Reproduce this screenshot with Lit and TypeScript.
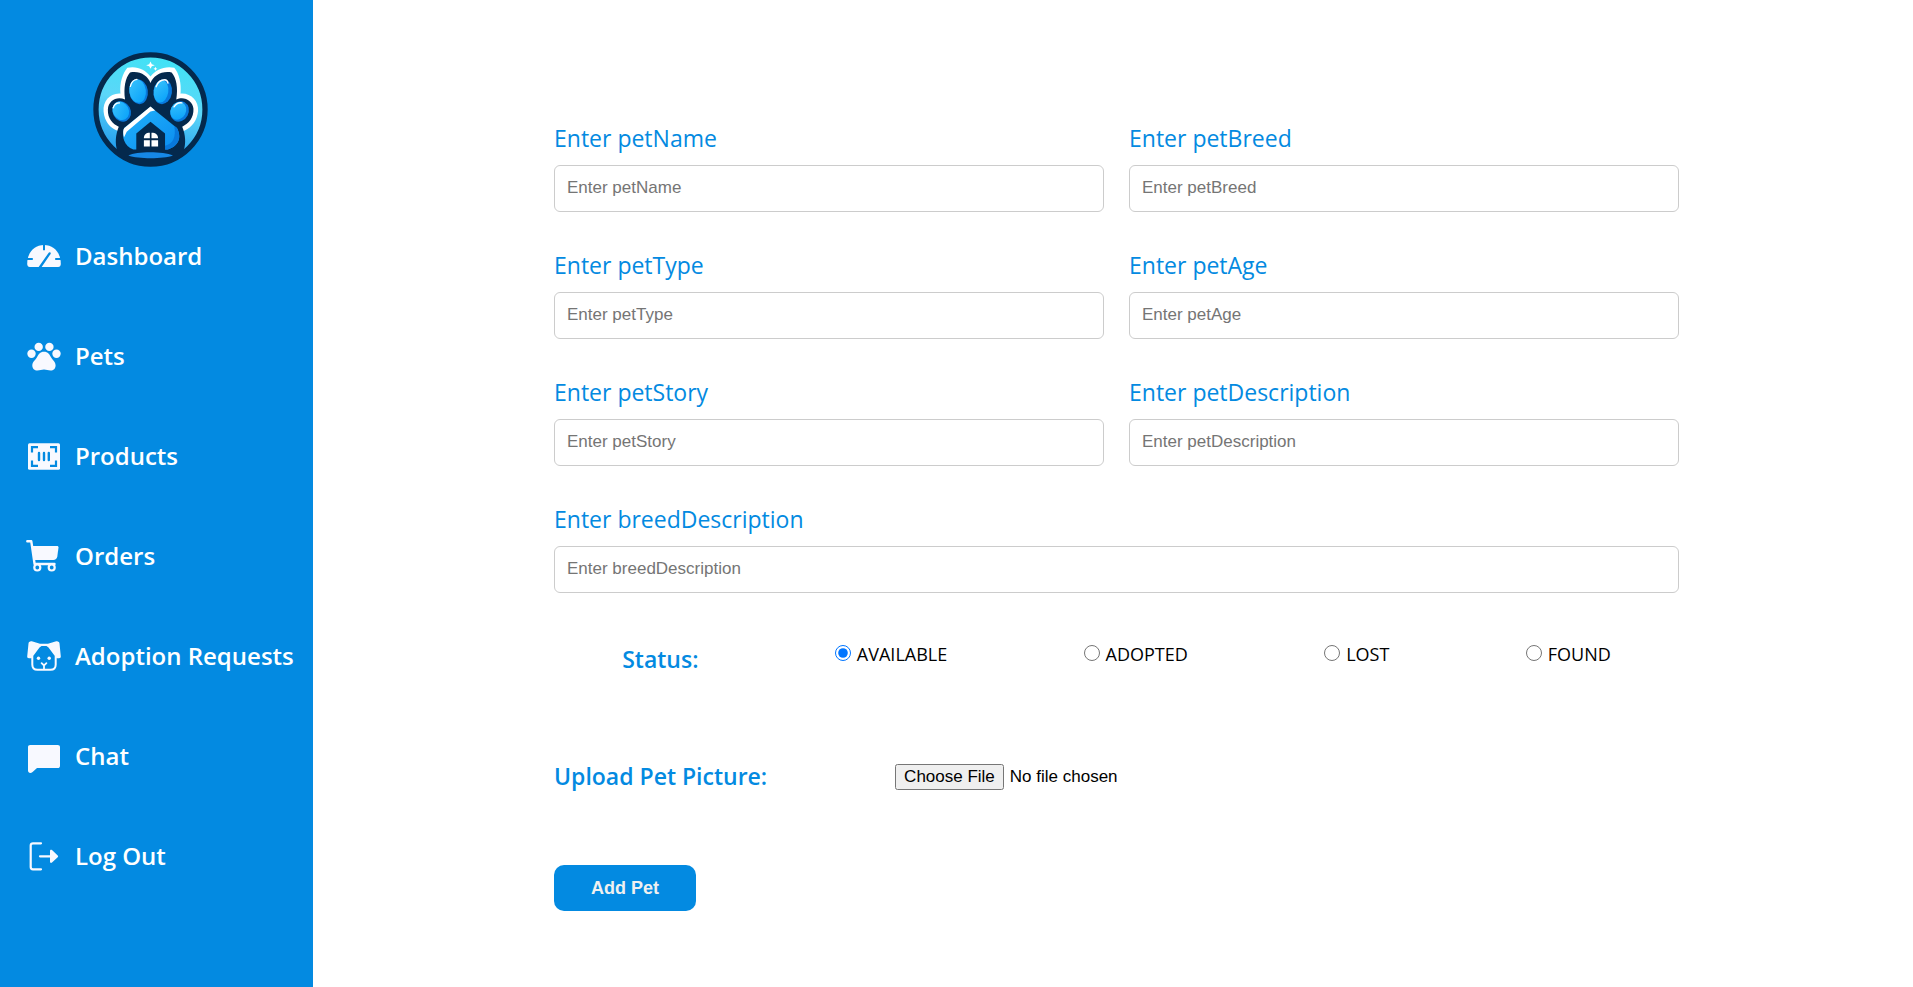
import { LitElement, html, svg, css } from "lit";
import { customElement, state } from "lit/decorators.js";

const ICONS: Record<string, unknown> = {
  dashboard: svg`
    <path fill="currentColor" d="M3.8 29C2.200 29 1.300 27.800 1.200 26C1.100 15 8 7 18 7S34.900 15 34.800 26C34.700 27.800 33.800 29 32.200 29Z"/>
    <path stroke="#038ae1" stroke-width="2" fill="none" d="M18 6V12.300M0 21H6.800M29.200 21H36"/>
    <path fill="#038ae1" d="M12.300 29.500L22.700 14.700C23.500 13.500 25.400 14.500 24.600 15.900L15.300 29.500Z"/>`,
  pets: svg`<g fill="currentColor">
    <circle cx="5.500" cy="15.800" r="4.200"/><circle cx="12.700" cy="8.900" r="4.200"/>
    <circle cx="23.400" cy="8.900" r="4.200"/><circle cx="30.500" cy="15.800" r="4.200"/>
    <path d="M18 13.800C22 13.800 23.600 16.500 25 19.200C26.600 22 29.600 23.800 29.600 27.500C29.600 30.500 27.500 32.500 24.600 32.500C22 32.500 20.500 31.500 18 31.500S14 32.500 11.400 32.500C8.500 32.500 6.300 30.500 6.300 27.500C6.300 23.800 9.400 22 11 19.200C12.400 16.500 14 13.800 18 13.800Z"/></g>`,
  products: svg`
    <rect x="2" y="5.300" width="32" height="26.500" rx="1.500" fill="currentColor"/>
    <path stroke="#038ae1" stroke-width="2.200" fill="none" d="M6 14.500V9.200H12M24 9.200H30V14.500M30 22.500V27.800H24M12 27.800H6V22.500"/>
    <path stroke="#038ae1" stroke-width="2.400" stroke-linecap="round" fill="none" d="M13 15V22M18 15V22M22.800 15V22"/>`,
  orders: svg`
    <path stroke="currentColor" stroke-width="2.400" stroke-linecap="round" stroke-linejoin="round" fill="none" d="M1.300 3.300H5.300L8.600 26H28.500"/>
    <path fill="currentColor" d="M6.500 8H31C32 8 32.600 8.600 32.500 9.500L31.300 18.500C31 20.700 29.400 22 27.300 22H8.300Z"/>
    <circle cx="11.300" cy="29.500" r="3" stroke="currentColor" stroke-width="2.200" fill="#038ae1"/>
    <circle cx="25.700" cy="29.500" r="3" stroke="currentColor" stroke-width="2.200" fill="#038ae1"/>`,
  adoption: svg`
    <path fill="currentColor" d="M5.800 3.300L14 5.700H22L30.200 3.300C32.300 3 33.300 4 33.500 5.500L34.800 18.500C34.900 19.700 34.200 20.200 33 20.200H30.500L22.500 9.500L20.500 8H15.500L13.500 9.500L5.500 20.200H3C1.800 20.200 1.100 19.700 1.200 18.500L2.500 5.500C2.700 4 3.700 3 5.800 3.300Z"/>
    <path stroke="currentColor" stroke-width="2" fill="none" d="M6.300 18V26.500C6.300 30 8.300 31.800 11.500 31.800H24.500C27.700 31.800 29.700 30 29.700 26.500V18"/>
    <circle cx="12.500" cy="20.300" r="1.700" fill="currentColor"/><circle cx="23.200" cy="20.300" r="1.700" fill="currentColor"/>
    <path stroke="currentColor" stroke-width="1.800" stroke-linecap="round" fill="none" d="M15.600 25.200L18 27.500L20.400 25.200M18 27.500V31"/>`,
  chat: svg`<path fill="currentColor" d="M4.300 7H31.700C33.200 7 34 7.800 34 9.300V27.700C34 29.200 33.200 30 31.700 30H11L6.600 34C4.600 35.600 2 35 2 32.500V9.300C2 7.800 2.800 7 4.300 7Z"/>`,
  logout: svg`
    <path stroke="currentColor" stroke-width="2.200" stroke-linecap="round" fill="none" d="M15 5.300H7C5.500 5.300 4.700 6 4.700 7.500V29C4.700 30.500 5.500 31.300 7 31.300H15M14 18.300H25"/>
    <path fill="currentColor" d="M24 12.800C24 11.600 25.200 11.300 26 12.100L31.700 17.400C32.300 18 32.300 18.600 31.700 19.200L26 24.500C25.200 25.300 24 25 24 23.800Z"/>`,
};

const NAV = [
  ["dashboard", "Dashboard"],
  ["pets", "Pets"],
  ["products", "Products"],
  ["orders", "Orders"],
  ["adoption", "Adoption Requests"],
  ["chat", "Chat"],
  ["logout", "Log Out"],
];

const FIELDS = ["petName", "petBreed", "petType", "petAge", "petStory", "petDescription", "breedDescription"];
const STATUSES = ["AVAILABLE", "ADOPTED", "LOST", "FOUND"];

@customElement("pet-logo")
class PetLogo extends LitElement {
  static styles = css`
    :host { display: block; }
    .logo { display: block; width: 115px; height: 115px; }
  `;
  render() {
    return html`<svg class="logo" viewBox="38 34 348 348" role="img" aria-label="Pet house logo">
      <defs>
        <linearGradient id="sky" x1="0.600" y1="0" x2="0.400" y2="1">
          <stop offset="0" stop-color="#3fe3f5"/><stop offset="0.450" stop-color="#5cd6f8"/><stop offset="1" stop-color="#1793ec"/>
        </linearGradient>
        <linearGradient id="pad" x1="0" y1="0" x2="1" y2="1">
          <stop offset="0" stop-color="#22b4fb"/><stop offset="1" stop-color="#0a8cf0"/>
        </linearGradient>
        <linearGradient id="toe" x1="0" y1="0" x2="0.700" y2="1">
          <stop offset="0" stop-color="#3cc4fc"/><stop offset="1" stop-color="#0ca4fa"/>
        </linearGradient>
      </defs>
      <circle cx="212" cy="208" r="165" fill="url(#sky)" stroke="#04294d" stroke-width="16"/>
      <path fill="#fff" d="M212 108C196 88 172 76 142 82C128 98 118 128 121 160C88 158 68 184 70 214C73 245 90 264 112 272L212 300L314 272C338 262 354 240 356 212C358 184 336 158 303 160C306 128 298 98 284 82C254 76 228 88 212 108Z"/>
      <path fill="#04294d" d="M212 128C204 106 180 90 150 96C136 112 130 142 135 178C112 166 84 180 83 208C82 236 98 252 116 260C106 284 104 312 112 334C136 362 172 377 212 377S290 362 312 334C320 310 318 284 308 260C328 250 343 234 342 206C340 180 312 166 290 178C296 142 290 112 276 96C246 90 220 106 212 128Z"/>
      <ellipse cx="176" cy="154" rx="28" ry="38" fill="#0878dc" transform="rotate(-8 176 154)"/>
      <ellipse cx="173" cy="152" rx="25" ry="36" fill="url(#toe)" transform="rotate(-8 173 152)"/>
      <ellipse cx="249" cy="154" rx="28" ry="38" fill="#0878dc" transform="rotate(8 249 154)"/>
      <ellipse cx="244" cy="153" rx="22" ry="34" fill="url(#toe)" transform="rotate(8 244 153)"/>
      <ellipse cx="125" cy="214" rx="27" ry="32" fill="#0878dc" transform="rotate(-28 125 214)"/>
      <ellipse cx="122" cy="212" rx="24" ry="29" fill="url(#toe)" transform="rotate(-28 122 212)"/>
      <ellipse cx="300" cy="214" rx="27" ry="32" fill="#0878dc" transform="rotate(28 300 214)"/>
      <ellipse cx="296" cy="212" rx="23" ry="28" fill="url(#toe)" transform="rotate(28 296 212)"/>
      <path fill="none" stroke="#fff" stroke-width="4" stroke-linecap="round" d="M151 138C154 126 162 118 171 117M229 139C234 125 244 118 255 118C261 118 264 123 265 128M99 203C102 194 109 188 118 188M283 200C289 191 297 186 307 188"/>
      <path fill="url(#pad)" d="M212 200L292 264C306 290 300 318 264 329H160C132 318 124 292 132 264Z"/>
      <path fill="#0878dc" d="M256 318C280 312 290 292 284 258L292 264C306 290 300 318 264 329H256Z"/>
      <path fill="#fff" d="M212 199L226 211L212 214L140 275L132 292C128 278 129 266 134 263Z"/>
      <path fill="#04294d" d="M212 245L256 281V340H169V281Z"/>
      <path fill="#fff" d="M192 295C192 284 198 278 210 278V295ZM215 278C228 278 235 284 235 295H215ZM192 301H210V320H192ZM215 301H235V320H215Z"/>
      <path fill="#1688e6" d="M145 347C170 334 250 334 280 347C250 358 175 358 145 347Z"/>
      <path fill="#fff" d="M212 63L216 71L225 74L216 77L212 85L208 77L199 74L208 71ZM227 79L229 83L233 85L229 87L227 91L225 87L221 85L225 83Z"/>
    </svg>`;
  }
}

@customElement("side-nav")
class SideNav extends LitElement {
  static styles = css`
    :host {
      display: flex;
      flex-direction: column;
      box-sizing: border-box;
      background: #038ae1;
      color: #f8f9ff;
      font-family: "Segoe UI", "Open Sans", "Noto Sans", sans-serif;
    }
    .brand { display: flex; justify-content: center; padding: 52px 12px 39px 0; }
    .list { list-style: none; margin: 0; padding: 0; }
    .link {
      display: flex;
      align-items: center;
      gap: 13px;
      height: 100px;
      padding-left: 26px;
      box-sizing: border-box;
      color: #fff;
      font-size: 24px;
      font-weight: 600;
      line-height: 34px;
      text-decoration: none;
      white-space: nowrap;
    }
    .icon { width: 36px; height: 36px; flex: none; color: #f8f9ff; }
    @media (max-height: 920px) { .link { height: 80px; } }
  `;
  render() {
    return html`
      <div class="brand"><pet-logo></pet-logo></div>
      <nav aria-label="Main"><ul class="list">
        ${NAV.map(([id, label]) => html`<li><a class="link" href="#${id}">
          <svg class="icon" viewBox="0 0 36 36" aria-hidden="true">${ICONS[id]}</svg><span>${label}</span></a></li>`)}
      </ul></nav>`;
  }
}

@customElement("pet-form")
class PetForm extends LitElement {
  @state() private status = "AVAILABLE";
  static styles = css`
    :host { display: block; font-family: "Segoe UI", "Open Sans", "Noto Sans", sans-serif; }
    .fields { display: grid; grid-template-columns: 1fr 1fr; column-gap: 25px; row-gap: 36px; }
    .field { display: flex; flex-direction: column; gap: 9px; }
    .field:last-child { grid-column: 1 / -1; }
    .label { color: #038ae1; font-size: 23px; line-height: 35px; }
    .strong { font-weight: 600; }
    .box {
      box-sizing: border-box;
      display: block;
      width: 100%;
      height: 47px;
      padding: 12px;
      border: 1px solid #ccc;
      border-radius: 6px;
      background: #fff;
      font: 17px/20px Arial, "Liberation Sans", sans-serif;
      resize: none;
      overflow: hidden;
    }
    .box::placeholder { color: #757575; }
    .status {
      display: flex;
      justify-content: space-around;
      align-items: flex-start;
      margin: 49px 0 0;
    }
    .option { font-size: 18px; line-height: 25px; color: #000; }
    .radio { width: 16px; height: 16px; margin: 3px 6px 0 0; }
    .upload { display: flex; align-items: center; gap: 128px; margin-top: 82px; }
    .file { font: 17px Arial, "Liberation Sans", sans-serif; }
    .file::file-selector-button { padding: 1px 7px; margin-inline-end: 6px; }
    .submit {
      display: block;
      margin-top: 71px;
      padding: 13px 37px;
      border: 0;
      border-radius: 10px;
      background: #038ae1;
      color: #f0f0f0;
      font: bold 18px/20px Arial, "Liberation Sans", sans-serif;
      cursor: pointer;
    }
  `;
  render() {
    return html`<form @submit=${(e: Event) => e.preventDefault()}>
      <div class="fields">
        ${FIELDS.map((name) => html`<div class="field">
          <label class="label" for=${name}>Enter ${name}</label>
          <textarea class="box" id=${name} name=${name} rows="1" placeholder="Enter ${name}"></textarea>
        </div>`)}
      </div>
      <div class="status" role="radiogroup" aria-labelledby="status-label">
        <span class="label strong" id="status-label">Status:</span>
        ${STATUSES.map((s) => html`<label class="option"><input class="radio" type="radio" name="status" value=${s}
          .checked=${this.status === s} @change=${() => (this.status = s)}>${s}</label>`)}
      </div>
      <div class="upload">
        <label class="label strong" for="picture">Upload Pet Picture:</label>
        <input class="file" id="picture" type="file" accept="image/*">
      </div>
      <button class="submit" type="submit">Add Pet</button>
    </form>`;
  }
}

@customElement("app-root")
class AppRoot extends LitElement {
  static styles = css`
    :host { display: grid; grid-template-columns: 313px 1fr; min-height: 100vh; background: #fff; }
    .main { padding: 121px 14.625% 40px 15.063%; }
  `;
  render() {
    return html`<side-nav></side-nav><main class="main"><pet-form></pet-form></main>`;
  }
}
